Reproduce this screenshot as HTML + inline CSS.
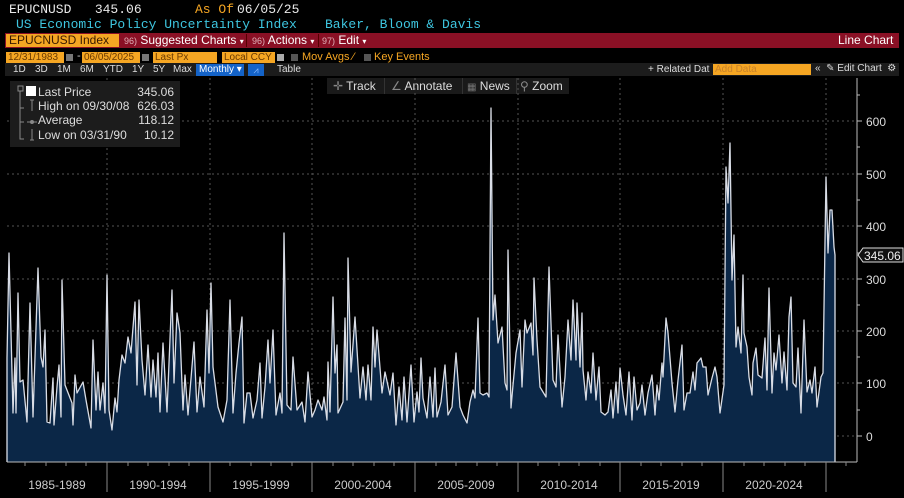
<!DOCTYPE html>
<html><head><meta charset="utf-8"><style>
*{margin:0;padding:0;box-sizing:border-box}
body{width:904px;height:498px;background:#000;overflow:hidden;position:relative;font-family:"Liberation Sans",sans-serif;color:#fff}
.a{position:absolute;white-space:nowrap}
.mono{font-family:"Liberation Mono",monospace}
.ob{position:absolute;background:#f5a623;color:#6b3a00;font-size:10px;line-height:11px;padding-left:2px;height:11px;overflow:hidden}
.sq{position:absolute;width:7px;height:7px;background:#777}
.tf{position:absolute;top:64px;font-size:10px;color:#ddd}
</style></head><body>
<div class="a mono" style="left:9px;top:2px;font-size:13px;color:#e8e8e8">EPUCNUSD&nbsp;&nbsp;&nbsp;345.06</div>
<div class="a mono" style="left:195px;top:2px;font-size:13px;color:#f5a623">As Of</div>
<div class="a mono" style="left:237px;top:2px;font-size:13px;color:#e8e8e8">06/05/25</div>
<div class="a mono" style="left:16px;top:17px;font-size:13px;color:#3ec6e0">US Economic Policy Uncertainty Index</div>
<div class="a mono" style="left:325px;top:17px;font-size:13px;color:#3ec6e0">Baker, Bloom &amp; Davis</div>
<div class="a" style="left:5px;top:33px;width:894px;height:15px;background:#8a1025"></div>
<div class="a" style="left:6px;top:34px;width:113px;height:13px;background:#f5a623;color:#3a1a00;font-size:12px;line-height:13px;padding-left:3px">EPUCNUSD Index</div>
<div class="a" style="left:124px;top:34px;font-size:12px;line-height:13px;color:#fff"><span style="color:#e0b0b8;font-size:9px">96)</span> Suggested Charts <span style="font-size:8px">▾</span></div>
<div class="a" style="left:246px;top:34px;width:1px;height:13px;background:#500"></div>
<div class="a" style="left:252px;top:34px;font-size:12px;line-height:13px"><span style="color:#e0b0b8;font-size:9px">96)</span> Actions <span style="font-size:8px">▾</span></div>
<div class="a" style="left:318px;top:34px;width:1px;height:13px;background:#500"></div>
<div class="a" style="left:322px;top:34px;font-size:12px;line-height:13px"><span style="color:#e0b0b8;font-size:9px">97)</span> Edit <span style="font-size:8px">▾</span></div>
<div class="a" style="left:838px;top:34px;font-size:12px;line-height:13px">Line Chart</div>

<div class="ob" style="left:6px;top:52px;width:58px">12/31/1983</div>
<div class="sq" style="left:66px;top:54px"></div>
<div class="a" style="left:77px;top:50px;font-size:11px;color:#ccc">-</div>
<div class="ob" style="left:82px;top:52px;width:58px">06/05/2025</div>
<div class="sq" style="left:142px;top:54px"></div>
<div class="ob" style="left:153px;top:52px;width:64px">Last Px</div>
<div class="ob" style="left:222px;top:52px;width:53px">Local CCY</div>
<div class="sq" style="left:277px;top:54px;background:#aaa"></div>
<div class="sq" style="left:291px;top:54px;background:#555"></div>
<div class="a" style="left:302px;top:51px;font-size:11px;color:#f5a623">Mov Avgs ⁄</div>
<div class="sq" style="left:364px;top:54px;background:#555"></div>
<div class="a" style="left:374px;top:51px;font-size:11px;color:#f5a623">Key Events</div>

<div class="a" style="left:5px;top:63px;width:894px;height:13px;background:#1c1c1c"></div>
<span class="tf" style="left:13px">1D</span><span class="tf" style="left:35px">3D</span><span class="tf" style="left:57px">1M</span><span class="tf" style="left:80px">6M</span><span class="tf" style="left:103px">YTD</span><span class="tf" style="left:132px">1Y</span><span class="tf" style="left:153px">5Y</span><span class="tf" style="left:173px">Max</span>
<div class="a" style="left:196px;top:64px;width:48px;height:12px;background:#1463c8;font-size:10px;line-height:12px;padding-left:3px">Monthly ▾</div>
<div class="a" style="left:248px;top:64px;width:16px;height:12px;background:#1463c8;font-size:9px;line-height:12px;color:#8bf;text-align:center">⩘</div>
<div class="a" style="left:277px;top:64px;font-size:10px;color:#ddd">Table</div>
<div class="a" style="left:648px;top:64px;font-size:10px;color:#ddd">+ Related Dat</div>
<div class="a" style="left:713px;top:64px;width:98px;height:11px;background:#f5a623;font-size:10px;line-height:11px;color:#c8822a;padding-left:2px">Add Data</div>
<div class="a" style="left:815px;top:63px;font-size:10px;color:#ddd">«&nbsp;&nbsp;✎ Edit Chart&nbsp;&nbsp;⚙</div>

<div class="a" style="left:327px;top:78px;width:242px;height:16px;background:#1a1a1a"></div>
<div class="a" style="left:333px;top:79px;font-size:12px;color:#ddd"><span style="color:#888">✛</span> Track</div>
<div class="a" style="left:384px;top:78px;width:1px;height:16px;background:#333"></div>
<div class="a" style="left:391px;top:79px;font-size:12px;color:#ddd"><span style="color:#888">∠</span> Annotate</div>
<div class="a" style="left:462px;top:78px;width:1px;height:16px;background:#333"></div>
<div class="a" style="left:467px;top:79px;font-size:12px;color:#ddd"><span style="color:#777;font-size:10px">▦</span> News</div>
<div class="a" style="left:516px;top:78px;width:1px;height:16px;background:#333"></div>
<div class="a" style="left:520px;top:79px;font-size:12px;color:#ddd"><span style="color:#888">⚲</span> Zoom</div>

<svg class="a" style="left:0;top:0" width="904" height="498">
<g stroke="#555" stroke-width="1" stroke-dasharray="2,3">
<line x1="7" y1="121" x2="857" y2="121"/><line x1="7" y1="174" x2="857" y2="174"/><line x1="7" y1="226" x2="857" y2="226"/><line x1="7" y1="279" x2="857" y2="279"/><line x1="7" y1="331" x2="857" y2="331"/><line x1="7" y1="383" x2="857" y2="383"/><line x1="7" y1="436" x2="857" y2="436"/>
<line x1="107" y1="78" x2="107" y2="462"/><line x1="210" y1="78" x2="210" y2="462"/><line x1="312" y1="78" x2="312" y2="462"/><line x1="415" y1="78" x2="415" y2="462"/><line x1="518" y1="78" x2="518" y2="462"/><line x1="620" y1="78" x2="620" y2="462"/><line x1="723" y1="78" x2="723" y2="462"/><line x1="826" y1="78" x2="826" y2="462"/>
</g>
<polyline fill="#0b2747" stroke="#d9dde6" stroke-width="1.3" stroke-linejoin="round" points="7,462 7,358 9,253 13,413 15,358 16,413 18,293 20,382 23,380 27,422 30,303 33,417 38,268 41,357 43,367 45,330 47,422 50,423 53,378 54,425 57,387 59,365 61,417 62,280 65,385 72,403 73,425 75,375 77,393 83,382 86,400 91,428 93,340 96,410 98,372 100,410 103,383 105,413 107,275 109,410 112,430 115,398 117,412 119,380 122,355 125,363 128,337 131,353 135,302 137,385 139,300 142,360 145,395 148,345 151,397 153,360 156,397 158,353 160,412 163,343 167,412 172,290 174,383 177,313 180,333 183,410 185,375 188,415 194,342 197,412 200,377 204,407 207,310 209,373 211,283 213,367 218,407 223,422 227,400 230,300 233,413 236,373 239,343 242,317 244,423 247,393 250,393 253,418 257,400 260,363 262,418 265,387 268,340 270,383 273,330 276,415 280,393 282,413 284,233 287,405 291,410 293,357 297,410 302,402 305,422 308,372 312,417 315,410 318,400 322,410 324,397 327,420 328,362 330,412 333,297 335,373 337,345 338,413 343,402 345,318 347,400 348,258 351,372 355,317 360,398 363,367 366,400 368,365 371,400 373,327 375,367 377,330 382,393 385,372 390,395 393,373 396,425 399,387 402,420 404,377 407,422 411,365 414,422 417,392 419,412 421,358 423,398 427,418 430,377 433,417 435,368 437,417 441,402 445,365 448,415 452,407 456,353 460,407 463,415 467,423 470,402 473,390 475,398 478,318 480,393 483,395 487,393 489,397 491,108 493,320 495,295 498,343 502,327 505,383 507,390 508,250 511,408 513,385 516,353 520,330 522,387 525,320 527,333 531,323 533,355 534,278 537,340 540,387 546,397 549,267 553,380 556,387 558,335 562,407 565,377 568,320 571,360 573,300 576,360 577,303 580,367 582,313 583,370 586,400 588,372 591,393 593,353 596,400 599,367 601,412 605,415 608,412 611,390 613,418 616,382 618,413 620,368 623,395 626,415 629,372 632,420 634,377 637,410 640,403 642,385 645,415 648,393 652,375 655,415 657,385 659,400 662,363 663,377 666,318 668,333 672,383 675,412 678,380 682,345 684,410 687,393 690,393 693,372 695,390 697,363 701,358 703,367 706,367 708,395 712,378 715,367 717,377 720,413 724,385 726,167 728,203 730,143 732,280 734,235 736,347 738,327 741,353 743,275 744,333 747,347 749,377 752,395 753,363 756,348 758,375 762,378 765,338 767,390 769,288 772,393 774,353 776,370 779,335 782,383 784,352 787,390 789,317 791,297 793,383 796,387 798,348 801,413 804,320 807,392 810,380 812,393 815,367 817,407 821,377 823,373 826,177 828,253 830,210 832,210 834,247 835,255 835,462"/>
<g stroke="#bbb" stroke-width="1" fill="none">
<line x1="857" y1="78" x2="857" y2="462"/>
<line x1="7" y1="462" x2="857" y2="462"/>
<g stroke="#888">
<line x1="107" y1="462" x2="107" y2="492"/><line x1="210" y1="462" x2="210" y2="492"/><line x1="312" y1="462" x2="312" y2="492"/><line x1="415" y1="462" x2="415" y2="492"/><line x1="518" y1="462" x2="518" y2="492"/><line x1="620" y1="462" x2="620" y2="492"/><line x1="723" y1="462" x2="723" y2="492"/><line x1="826" y1="462" x2="826" y2="492"/>
</g>
<path d="M857,95h3M857,147h3M857,200h3M857,253h3M857,305h3M857,357h3M857,410h3M857,121h5M857,174h5M857,226h5M857,279h5M857,331h5M857,383h5M857,436h5"/>
<path d="M25,462v4M46,462v4M66,462v4M86,462v4M128,462v4M148,462v4M169,462v4M189,462v4M230,462v4M251,462v4M271,462v4M292,462v4M333,462v4M353,462v4M374,462v4M394,462v4M436,462v4M456,462v4M477,462v4M497,462v4M538,462v4M559,462v4M579,462v4M600,462v4M641,462v4M661,462v4M682,462v4M702,462v4M744,462v4M764,462v4M785,462v4M805,462v4M846,462v4" stroke="#888"/>
</g>
<g fill="#ddd" font-family="Liberation Sans,sans-serif" font-size="12">
<text x="866" y="126">600</text><text x="866" y="179">500</text><text x="866" y="231">400</text><text x="866" y="284">300</text><text x="866" y="336">200</text><text x="866" y="388">100</text><text x="866" y="441">0</text>
</g>
<path d="M858,255 l5,-7 h40 v14 h-40 z" fill="#111" stroke="#ddd" stroke-width="1"/>
<text x="864" y="260" fill="#eee" font-family="Liberation Sans,sans-serif" font-size="12">345.06</text>
<g fill="#ccc" font-family="Liberation Sans,sans-serif" font-size="12" text-anchor="middle">
<text x="57" y="489">1985-1989</text><text x="158" y="489">1990-1994</text><text x="261" y="489">1995-1999</text><text x="363" y="489">2000-2004</text><text x="466" y="489">2005-2009</text><text x="569" y="489">2010-2014</text><text x="671" y="489">2015-2019</text><text x="774" y="489">2020-2024</text>
</g>
</svg>

<div class="a" style="left:10px;top:81px;width:170px;height:66px;background:#1c1c1c"></div>
<svg class="a" style="left:10px;top:81px" width="30" height="66">
<g stroke="#888" fill="none" stroke-width="1"><rect x="8" y="5" width="5" height="5"/><path d="M10,10v48h4M10,27h4M10,41h4"/><path d="M20,19h4M22,19v11M22,48v11M20,59h4"/><path d="M17,41h10"/><circle cx="22" cy="41" r="1.5" fill="#888"/></g>
<rect x="16" y="5" width="10" height="10" fill="#fff"/>
</svg>
<div class="a" style="left:38px;top:85px;font-size:12px;line-height:14.2px;color:#ddd">Last Price<br>High on 09/30/08<br>Average<br>Low on 03/31/90</div>
<div class="a" style="left:126px;top:85px;width:48px;text-align:right;font-size:12px;line-height:14.2px;color:#ddd">345.06<br>626.03<br>118.12<br>10.12</div>
</body></html>
